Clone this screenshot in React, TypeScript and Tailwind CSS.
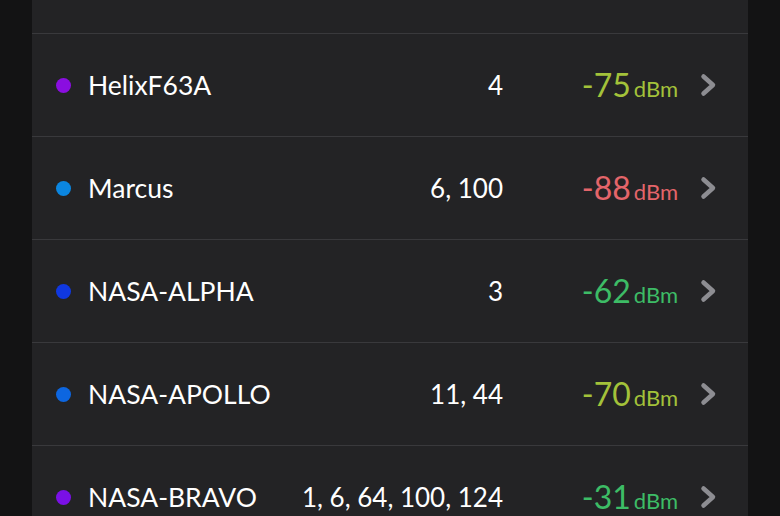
const networks = [
  { name: "HelixF63A", dot: "bg-[#8a0ee0]", channels: "4", dbm: "-75", tone: "text-[#a3c23a]" },
  { name: "Marcus", dot: "bg-[#0b86e0]", channels: "6, 100", dbm: "-88", tone: "text-[#e4656a]" },
  { name: "NASA-ALPHA", dot: "bg-[#1038e0]", channels: "3", dbm: "-62", tone: "text-[#3dbc66]" },
  { name: "NASA-APOLLO", dot: "bg-[#0d66e0]", channels: "11, 44", dbm: "-70", tone: "text-[#a3c23a]" },
  { name: "NASA-BRAVO", dot: "bg-[#7a10e6]", channels: "1, 6, 64, 100, 124", dbm: "-31", tone: "text-[#3dbc66]" },
];

function Chevron() {
  return (
    <svg width="17" height="24" viewBox="0 0 17 24" fill="none" className="block">
      <path d="M3.5 3.5 L13 12 L3.5 20.5" stroke="#8d8d92" strokeWidth="4.5" strokeLinecap="round" strokeLinejoin="round" />
    </svg>
  );
}

export default function App() {
  return (
    <div className="h-[516px] w-[780px] overflow-hidden bg-[#131314] font-['Lato',sans-serif]">
      <div className="mx-[32px] h-full bg-[#232325]">
        <div className="h-[33px]" />
        {networks.map((n) => (
          <div key={n.name} className="flex h-[103px] items-center border-t border-[#39393c] pl-[24px] pr-[31px] text-white">
            <span className={`h-[15px] w-[15px] shrink-0 rounded-full ${n.dot}`} />
            <span className="ml-[17px] flex-1 text-[26.5px] leading-none">{n.name}</span>
            <span className="text-right text-[26px] leading-none">{n.channels}</span>
            <span className={`flex w-[175px] items-baseline justify-end ${n.tone}`}>
              <span className="text-[32px] leading-none">{n.dbm}</span>
              <span className="ml-[3px] text-[22px] leading-none">dBm</span>
            </span>
            <span className="ml-[22px]">
              <Chevron />
            </span>
          </div>
        ))}
      </div>
    </div>
  );
}
